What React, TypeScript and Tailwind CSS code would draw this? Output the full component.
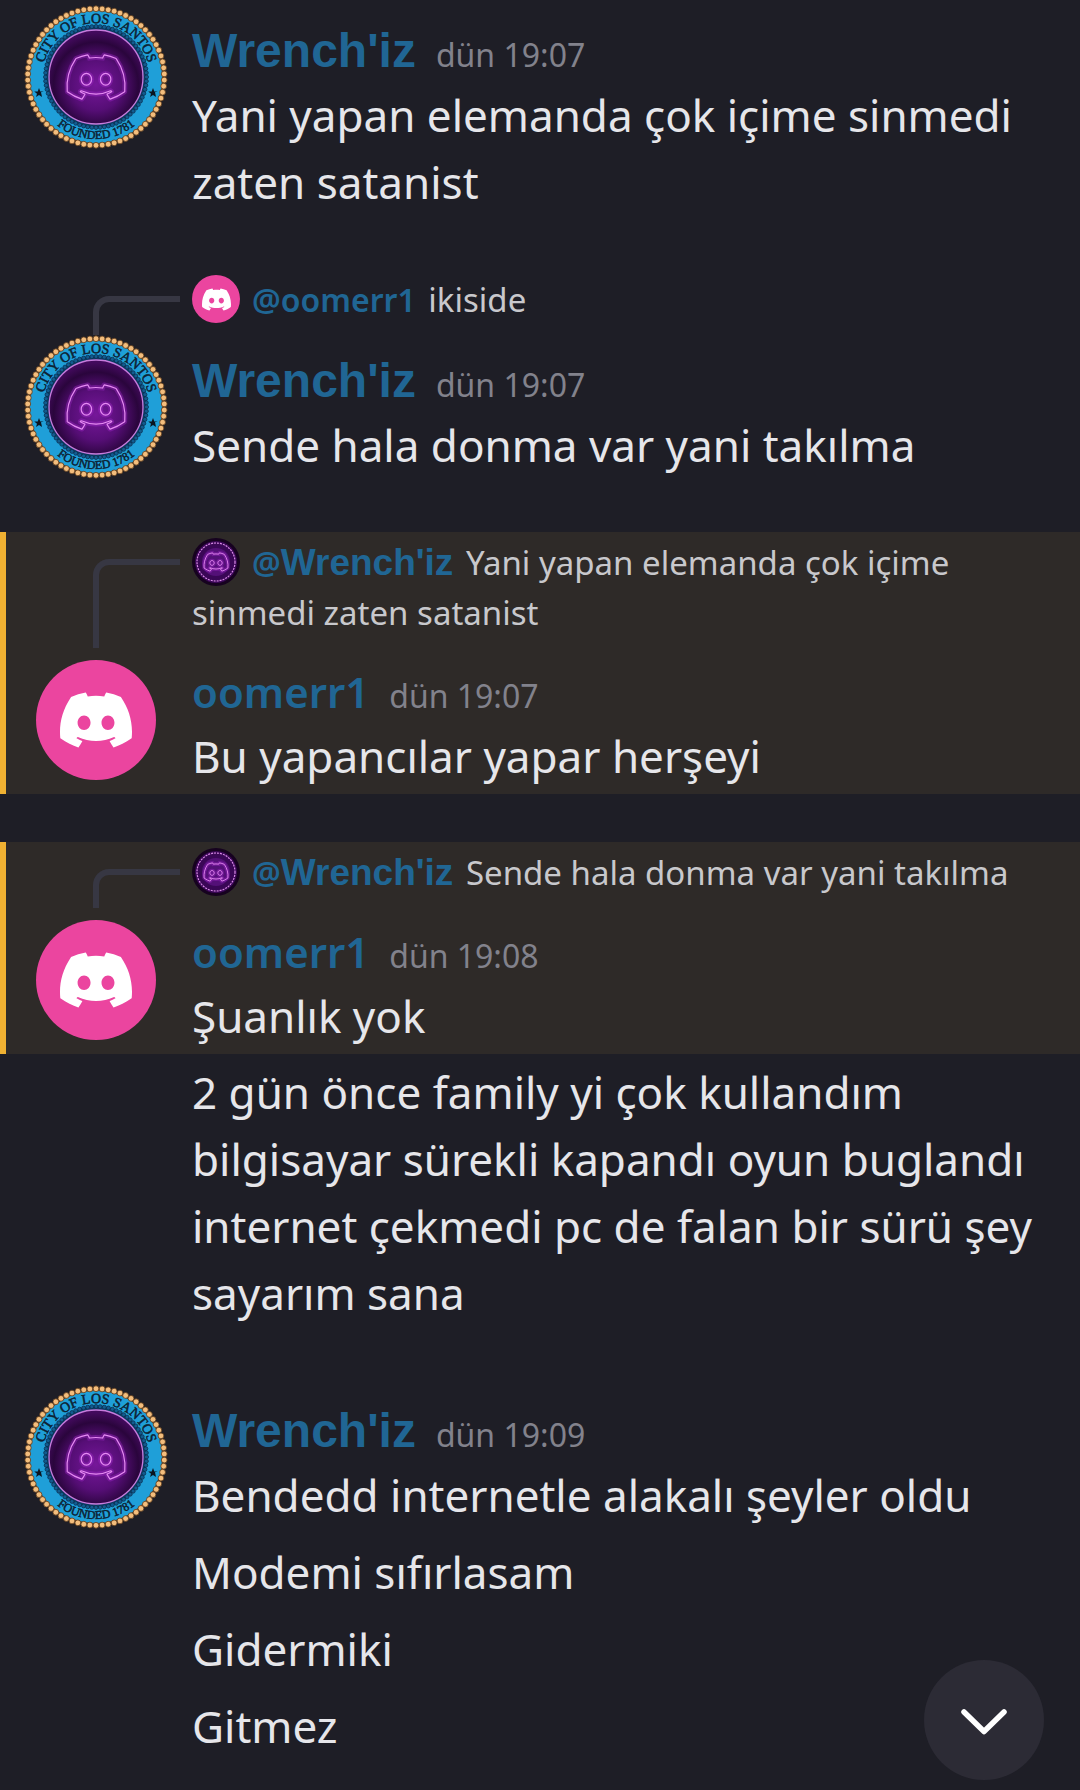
import { useId } from "react";
import { SiDiscord } from "react-icons/si";

type User = "wrench" | "oomerr";
type Reply = { user: User; text: string };
type Message = {
  id: number;
  user: User;
  time: string;
  lines: string[];
  reply?: Reply;
  mention?: boolean;
};

const names: Record<User, string> = { wrench: "Wrench'iz", oomerr: "oomerr1" };

const messages: Message[] = [
  { id: 1, user: "wrench", time: "dün 19:07", lines: ["Yani yapan elemanda çok içime sinmedi zaten satanist"] },
  {
    id: 2,
    user: "wrench",
    time: "dün 19:07",
    lines: ["Sende hala donma var yani takılma"],
    reply: { user: "oomerr", text: "ikiside" },
  },
  {
    id: 3,
    user: "oomerr",
    time: "dün 19:07",
    lines: ["Bu yapancılar yapar herşeyi"],
    reply: { user: "wrench", text: "Yani yapan elemanda çok içime sinmedi zaten satanist" },
    mention: true,
  },
  {
    id: 4,
    user: "oomerr",
    time: "dün 19:08",
    lines: [
      "Şuanlık yok",
      "2 gün önce family yi çok kullandım bilgisayar sürekli kapandı oyun buglandı internet çekmedi pc de falan bir sürü şey sayarım sana",
    ],
    reply: { user: "wrench", text: "Sende hala donma var yani takılma" },
    mention: true,
  },
  {
    id: 5,
    user: "wrench",
    time: "dün 19:09",
    lines: ["Bendedd internetle alakalı şeyler oldu", "Modemi sıfırlasam", "Gidermiki", "Gitmez"],
  },
];

// Evenly spaced beads on a circle
function Beads({ count, radius, size, fill, stroke }: { count: number; radius: number; size: number; fill: string; stroke: string }) {
  return (
    <g fill={fill} stroke={stroke} strokeWidth={0.8}>
      {Array.from({ length: count }, (_, i) => {
        const a = (i / count) * Math.PI * 2;
        return <circle key={i} cx={Math.sin(a) * radius} cy={-Math.cos(a) * radius} r={size} />;
      })}
    </g>
  );
}

function NeonFace({ size, stroke = 0.5 }: { size: number; stroke?: number }) {
  const box = { x: -size / 2, y: -size / 2, size, fill: "none", overflow: "visible" };
  return (
    <>
      <SiDiscord {...box} stroke="#a92bd0" strokeWidth={stroke * 4} opacity={0.35} />
      <SiDiscord {...box} stroke="#e58af2" strokeWidth={stroke} />
    </>
  );
}

// Avatar with the city seal frame around it
function SealAvatar() {
  const id = useId();
  const star = "M0-5 1.3-1.6 4.8-1.5 2-0.7 3 4 0 2-3 4-2 0.7-4.8-1.5-1.3-1.6Z";
  return (
    <svg viewBox="-72 -72 144 144" className="-m-3 size-36 shrink-0" role="img" aria-label="Wrench'iz">
      <defs>
        <radialGradient id={`${id}g`} cx="0.5" cy="0.58" r="0.55">
          <stop offset="0" stopColor="#76179a" />
          <stop offset="0.5" stopColor="#560e76" />
          <stop offset="0.82" stopColor="#2a053c" />
          <stop offset="1" stopColor="#420a5c" />
        </radialGradient>
        <path id={`${id}t`} d="M0 54A54 54 0 1 1 0.01 54" />
        <path id={`${id}b`} d="M-62 0A62 62 0 0 0 62 0" />
      </defs>
      <circle r={69} fill="#5b3a1c" />
      <circle r={66} fill="#1f9fd8" />
      <Beads count={70} radius={68.3} size={2.9} fill="#f3bd7c" stroke="#5b3a1c" />
      <circle r={51} fill="#0b3f66" />
      <Beads count={76} radius={50.5} size={2} fill="#125c8f" stroke="#0a2e50" />
      <circle r={47} fill={`url(#${id}g)`} stroke="#c77bdc" strokeWidth={1.3} />
      <NeonFace size={58} />
      <g fill="#0d2233" fontFamily="Liberation Serif, serif" textAnchor="middle" stroke="#0d2233" strokeWidth={0.5}>
        <text fontSize={14}>
          <textPath href={`#${id}t`} startOffset="50%">CITY OF LOS SANTOS</textPath>
        </text>
        <text fontSize={12}>
          <textPath href={`#${id}b`} startOffset="50%">FOUNDED 1781</textPath>
        </text>
      </g>
      <path d={star} fill="#0a1520" transform="translate(-57 16)" />
      <path d={star} fill="#0a1520" transform="translate(57 16)" />
    </svg>
  );
}

function PinkAvatar() {
  return (
    <div className="flex size-30 shrink-0 items-center justify-center rounded-full bg-[#eb459f] text-white">
      <SiDiscord size={72} aria-label="oomerr1" />
    </div>
  );
}

function MiniAvatar({ user }: { user: User }) {
  if (user === "oomerr") {
    return (
      <span className="mr-3 inline-flex size-12 items-center justify-center rounded-full bg-[#eb459f] align-top text-white">
        <SiDiscord size={29} />
      </span>
    );
  }
  return (
    <svg viewBox="-24 -24 48 48" className="mr-3 inline-block size-12 align-top" aria-hidden="true">
      <circle r={24} fill="#16021f" />
      <circle r={21} fill="#3a0756" />
      <circle r={14} fill="#541078" />
      <circle r={19} fill="none" stroke="#d98ae6" strokeWidth={1.2} strokeDasharray="2 1" />
      <NeonFace size={24} stroke={0.9} />
    </svg>
  );
}

function ReplyPreview({ reply }: { reply: Reply }) {
  return (
    <div className="flex pb-[22px]">
      <div className="flex w-48 shrink-0 justify-end pr-3">
        <div className="mt-[21px] -mb-[10px] w-[87px] rounded-tl-2xl border-t-6 border-l-6 border-[#373743]" />
      </div>
      <p className="min-w-0 flex-1 pr-8 text-[33px] leading-[50px] text-[#c8c8cc]">
        <MiniAvatar user={reply.user} />
        <a href="#" className="mr-1 text-[32px] font-semibold text-[#206694]">
          @<span className={reply.user === "wrench" ? "font-['Liberation_Sans',sans-serif] text-[37px] leading-none font-bold" : ""}>
            {names[reply.user]}
          </span>
        </a>{" "}
        {reply.text}
      </p>
    </div>
  );
}

function MessageGroup({ message }: { message: Message }) {
  const { user, reply, mention, lines, time } = message;
  const [first, ...rest] = lines;
  return (
    <article>
      <div
        className={`relative ${reply ? "pt-[6px]" : "pt-[17px]"} ${
          mention ? "bg-[#2e2a28] pb-1 before:absolute before:inset-y-0 before:left-0 before:w-[6px] before:bg-[#f0b132]" : "pb-[5px]"
        }`}
      >
        {reply && <ReplyPreview reply={reply} />}
        <div className="flex items-start">
          <div className="w-48 shrink-0 pl-9">{user === "wrench" ? <SealAvatar /> : <PinkAvatar />}</div>
          <div className="min-w-0 flex-1 pr-6">
            <header className={`flex items-baseline gap-5 ${user === "wrench" ? "h-[65px]" : "h-[63px]"}`}>
              <h2
                className={
                  user === "wrench"
                    ? "font-['Liberation_Sans',sans-serif] text-[48px] leading-[68px] font-bold text-[#206694]"
                    : "text-[42px] leading-[64px] font-semibold text-[#206694]"
                }
              >
                {names[user]}
              </h2>
              <time className="text-[32px] leading-none text-[#82828c]">{time}</time>
            </header>
            <p className="text-[44px] leading-[67px]">{first}</p>
          </div>
        </div>
      </div>
      {rest.map((line) => (
        <p key={line} className="py-[5px] pr-6 pl-48 text-[44px] leading-[67px]">
          {line}
        </p>
      ))}
    </article>
  );
}

export default function App() {
  return (
    <main className="min-h-screen bg-[#1e1e26] font-['Noto_Sans',sans-serif] text-[#e6e6ea]">
      <div className="flex flex-col gap-12">
        {messages.map((m) => (
          <MessageGroup key={m.id} message={m} />
        ))}
      </div>
      <button
        aria-label="En alta in"
        className="fixed right-9 bottom-[10px] flex size-30 items-center justify-center rounded-full bg-[#2c2b35]"
      >
        <svg viewBox="0 0 46 26" className="mt-1 h-[26px] w-[46px]" fill="none" stroke="#fff" strokeWidth={5.5} strokeLinecap="round" strokeLinejoin="round">
          <path d="M3 3 23 22.5 43 3" />
        </svg>
      </button>
    </main>
  );
}
